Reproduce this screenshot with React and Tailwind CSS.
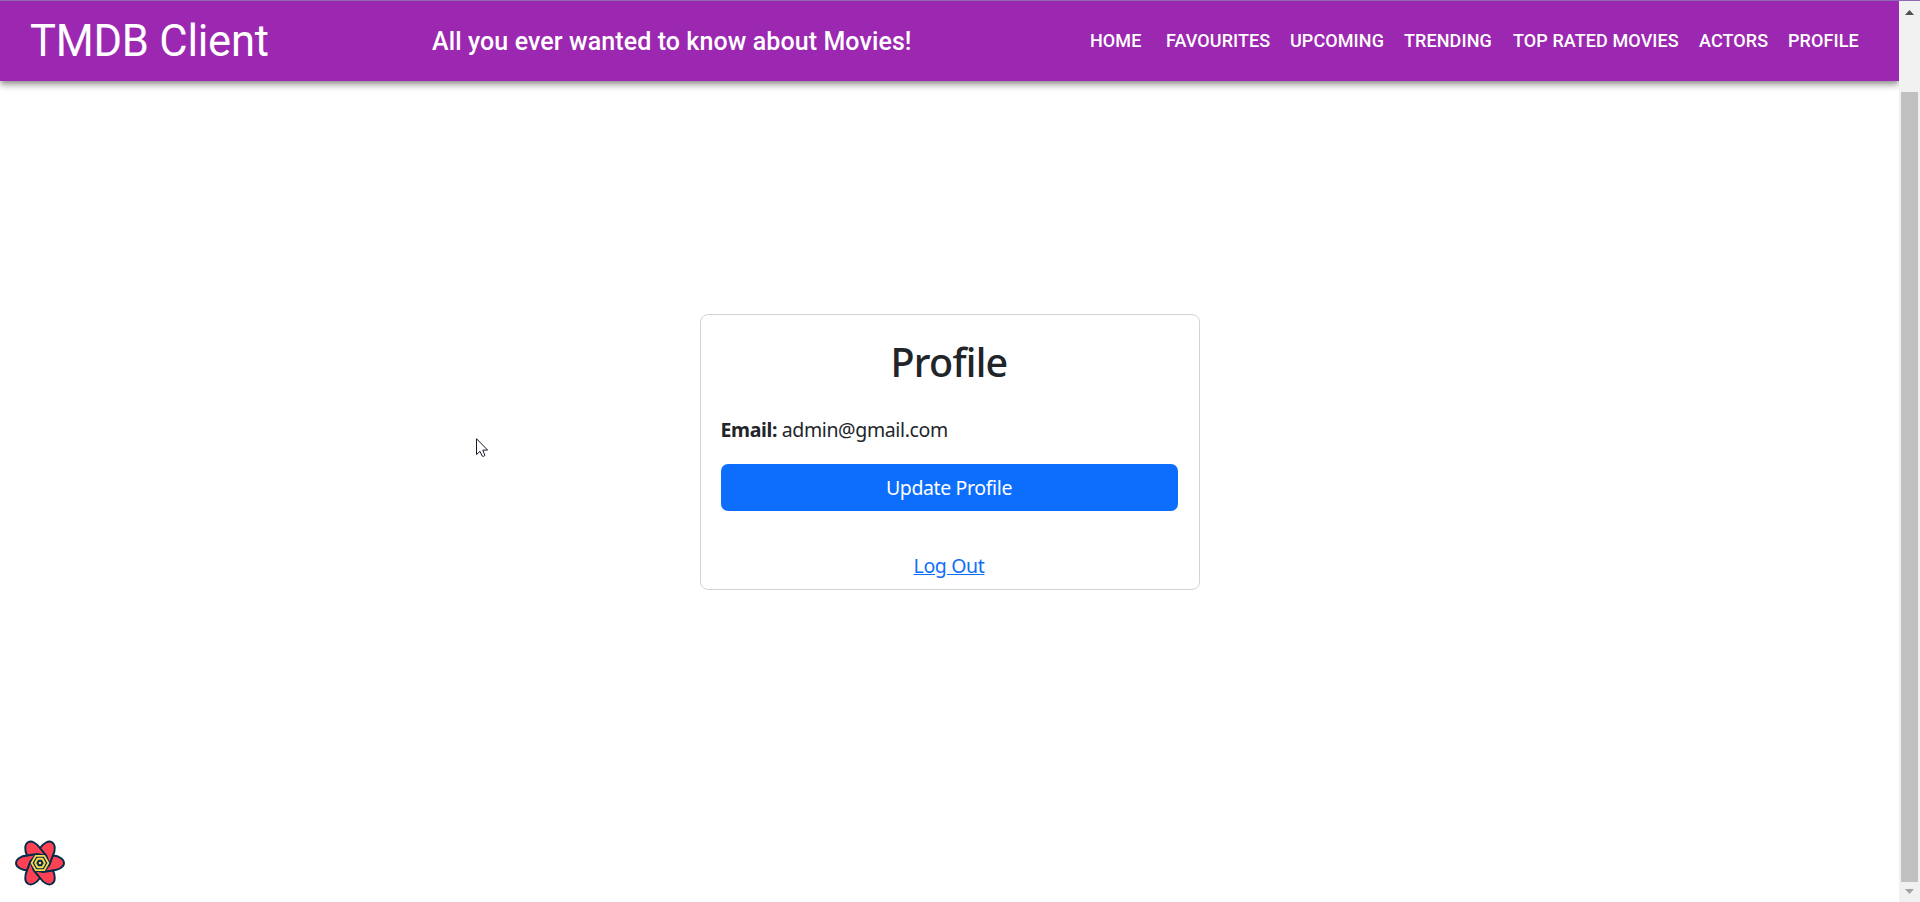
const links = [
  { label: 'HOME', place: 'w-[76px]' },
  { label: 'FAVOURITES', place: 'w-[124px]' },
  { label: 'UPCOMING', place: 'w-[114px]' },
  { label: 'TRENDING', place: 'w-[109px]' },
  { label: 'TOP RATED MOVIES', place: 'w-[186px]' },
  { label: 'ACTORS', place: 'w-[89px]' },
  { label: 'PROFILE', place: 'w-[72px]' },
]

function Header() {
  return (
    <header className="flex h-20 shrink-0 items-center bg-[#9c27b0] pl-[30px] font-[Roboto,sans-serif] text-white shadow-[0_2px_5px_-1px_rgba(0,0,0,0.3),0_5px_6px_rgba(0,0,0,0.2),0_1px_12px_rgba(0,0,0,0.12)]">
      <h1 className="w-[402px] whitespace-nowrap pt-px text-[43.5px] leading-[52px] tracking-[-0.005em]">TMDB Client</h1>
      <h2 className="w-[658px] whitespace-nowrap pt-0.5 text-[25px] font-medium leading-10 tracking-[0.0037em]">
        All you ever wanted to know about Movies!
      </h2>
      <nav className="flex">
        {links.map((l) => (
          <a
            key={l.label}
            className={`${l.place} whitespace-nowrap text-[18px] font-medium leading-8 tracking-[0.005em]`}
          >
            {l.label}
          </a>
        ))}
      </nav>
    </header>
  )
}

function ProfileCard() {
  return (
    <section className="flex h-[276px] w-[500px] flex-col rounded-[8px] border border-[#d3d3d4] pl-5 pr-[21px] pt-5 font-['Noto_Sans',sans-serif] text-[19.5px] leading-[30px] tracking-[-0.019em] text-[#212529]">
      <h2 className="text-center text-[39.5px] font-medium leading-[54px] tracking-[-0.019em]">Profile</h2>
      <p className="mt-[26px]">
        <strong className="font-bold">Email:</strong> admin@gmail.com
      </p>
      <button className="mt-[19px] h-[47px] shrink-0 rounded-[7px] bg-[#0d6efd] text-white">Update Profile</button>
      <a className="mt-10 self-center text-[#0d6efd] underline">Log Out</a>
    </section>
  )
}

function QueryLogo() {
  const petal = 'M-13 -7.5 L-3.2 -9.1 L-9.5 -1.8 L-13 7.5 C-19 7 -24 4 -24 0 C-24 -4 -19 -7 -13 -7.5 Z'
  return (
    <svg className="absolute bottom-[14px] left-[15px] h-[50px] w-[50px]" viewBox="-25 -25 50 50">
      <g fill="#ff4154" stroke="#002c4b" strokeWidth="1.9" strokeLinejoin="round">
        {[0, 60, 120, 180, 240, 300].map((a) => (
          <path key={a} d={petal} transform={`rotate(${a})`} />
        ))}
      </g>
      <g strokeLinejoin="round">
        <path d="M-10.4 0 L-5.2 -9 H5.2 L10.4 0 L5.2 9 H-5.2 Z" fill="#002c4b" />
        <path d="M-8.4 0 L-4.2 -7.2 H4.2 L8.4 0 L4.2 7.2 H-4.2 Z" fill="none" stroke="#ffd94c" strokeWidth="1.7" />
        <path d="M-4.8 0 L-2.4 -4.2 H2.4 L4.8 0 L2.4 4.2 H-2.4 Z" fill="none" stroke="#ffd94c" strokeWidth="1.9" />
        <circle r="1.3" fill="#ffd94c" />
      </g>
    </svg>
  )
}

function Scrollbar() {
  return (
    <div className="flex w-[21px] shrink-0 flex-col items-center bg-[#f1f1f1]">
      <svg className="mt-[9px] h-[5px] w-[9px]" viewBox="0 0 9 5">
        <path d="M0 5 L4.5 0 L9 5 Z" fill="#505050" />
      </svg>
      <div className="mt-[77px] h-[790px] w-[17px] bg-[#c1c1c1]" />
      <svg className="mt-[7px] h-[5px] w-[9px]" viewBox="0 0 9 5">
        <path d="M0 0 L4.5 5 L9 0 Z" fill="#a3a3a3" />
      </svg>
    </div>
  )
}

export default function App() {
  return (
    <div className="flex h-[902px] w-[1920px] overflow-hidden border-t border-[#9069b5] bg-white">
      <div className="relative flex w-[1899px] flex-col overflow-hidden">
        <Header />
        <main className="flex justify-center pt-[233px]">
          <ProfileCard />
        </main>
        <QueryLogo />
        <svg className="absolute left-[476px] top-[437px] h-5 w-3" viewBox="0 0 12 20">
          <path
            d="M.5 .7 V16.6 L4 13.3 L6.2 18.1 Q7.5 19 8.9 17.4 L6.8 12.1 H11.6 Z"
            fill="#fff"
            stroke="#1b1828"
            strokeWidth="1"
          />
        </svg>
      </div>
      <Scrollbar />
    </div>
  )
}
